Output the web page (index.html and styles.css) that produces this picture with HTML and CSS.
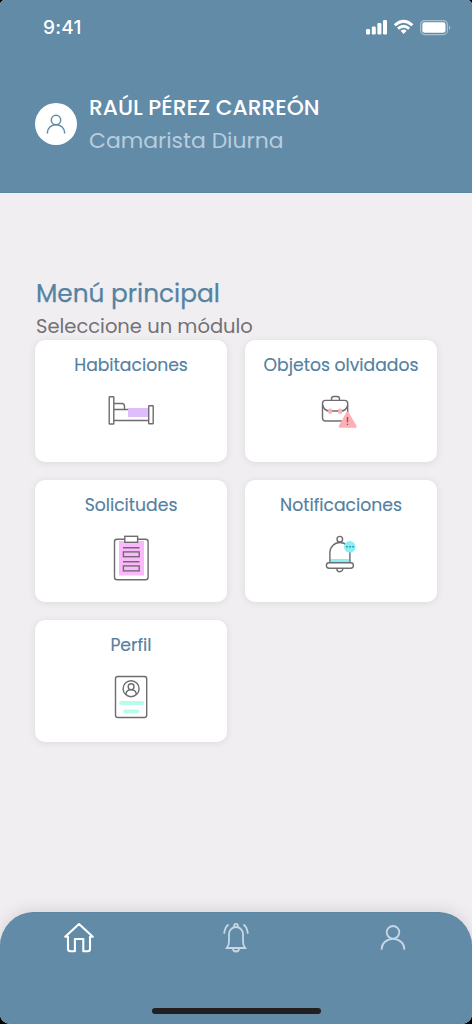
FILE: index.html
```html
<!DOCTYPE html>
<html lang="es">
<head>
<meta charset="utf-8">
<meta name="viewport" content="width=device-width">
<title>Menú principal</title>
<link rel="stylesheet" href="styles.css">
</head>
<body>
<div class="screen">
  <header class="header">
    <div class="status">
      <span class="time">9:41</span>
      <svg class="signals" width="86" height="18" viewBox="0 0 86 18" fill="#fff">
        <rect x="0" y="11" width="4" height="5.5" rx="1.2"/><rect x="5.8" y="8.5" width="4" height="8" rx="1.2"/><rect x="11.4" y="5" width="4" height="11.5" rx="1.2"/><rect x="17" y="2" width="4" height="14.5" rx="1.2"/>
        <g fill="none" stroke="#fff" stroke-width="2.9"><path d="M28.8 7.2q8.8-8 17.6 0"/><path d="M32 10.7q5.6-4.8 11.2 0"/></g><path d="M34.6 12.8q3-2.4 6 0l-3 3.2z"/>
        <rect x="54.6" y="2.6" width="26.8" height="14" rx="4" fill="none" stroke="#fff" stroke-opacity=".45" stroke-width="1.2"/><rect x="56.3" y="4.2" width="23.2" height="10.6" rx="2.4"/><path d="M83 7.5q2.6 2 0 4.5z" fill-opacity=".5"/>
      </svg>
    </div>
    <div class="user">
      <div class="avatar"><svg width="20" height="21" viewBox="0 0 20 21" fill="none" stroke="#628ba8" stroke-width="1.5"><circle cx="10" cy="6" r="4.7"/><path d="M1.4 19.5v-1a8.6 7.8 0 0 1 17.2 0v1"/></svg></div>
      <div class="who"><div class="name">RAÚL PÉREZ CARREÓN</div><div class="role">Camarista Diurna</div></div>
    </div>
  </header>
  <main class="main">
    <h1 class="title">Menú principal</h1>
    <p class="subtitle">Seleccione un módulo</p>
    <div class="grid">
      <a class="card"><span class="label">Habitaciones</span>
        <svg class="icon" width="75" height="60" viewBox="0 0 75 60" fill="none" stroke="#6e6c70" stroke-width="1.4"><path d="M33 28h20v9H33z" fill="#dfbdfd" stroke="none"/><rect x="14.2" y="16.8" width="4.6" height="27.2" rx=".6"/><path d="M19 23.5h8q2.5 0 2.5 3v3M19 29.5h14M19 40.5h34"/><rect x="53.7" y="25.7" width="4.5" height="18" rx=".5"/></svg></a>
      <a class="card"><span class="label">Objetos olvidados</span>
        <svg class="icon icon-case" width="75" height="60" viewBox="0 0 75 60" fill="none" stroke="#6e6c70" stroke-width="1.4"><rect x="18.5" y="20.4" width="25.2" height="20.6" rx="3"/><path d="M27.5 20v-1.2q0-2.3 2.3-2.3h3.4q2.3 0 2.3 2.3V20M18.7 25q1.2 6 7 6h11q5.8 0 7-6"/><g fill="#feafb4" stroke="none"><rect x="24.2" y="28.5" width="3.8" height="5.2" rx="1.5"/><rect x="34.2" y="28.5" width="3.8" height="5.2" rx="1.5"/><path d="M42.4 32.2q1.1-1.6 2.2 0l8 13.8q.8 1.8-1 1.8H35.8q-1.8 0-1-1.8z"/></g><path d="M43.5 37v5.3M43.5 43.8v1.3" stroke="#725b60" stroke-width="1.3"/></svg></a>
      <a class="card"><span class="label">Solicitudes</span>
        <svg class="icon" width="75" height="70" viewBox="0 0 75 70" fill="none" stroke="#6e6c70" stroke-width="1.4"><path d="M24 21h25v34.5H24z" fill="#fbb8fa" stroke="none"/><rect x="19.5" y="19.2" width="33.6" height="40.6" rx="2.5"/><rect x="29.8" y="16.3" width="12.8" height="6" fill="#fff"/><path d="M28 27.8h16.5M28 41.8h16.5"/><rect x="28.4" y="31.9" width="15.8" height="4.8"/><rect x="28.4" y="45.9" width="15.8" height="5"/></svg></a>
      <a class="card"><span class="label">Notificaciones</span>
        <svg class="icon" width="75" height="70" viewBox="0 0 75 70" fill="none" stroke="#6e6c70" stroke-width="1.4"><path d="M25.4 39h19v4h-19z" fill="#83f0fc" stroke="none"/><circle cx="34.8" cy="19.2" r="2.8"/><path d="M24.9 42V32.5a10 10 0 0 1 20 0V42M31.8 48.7a3 3 0 0 0 6 0"/><rect x="21.4" y="42.8" width="27" height="5.5" rx="2.7" fill="#fff"/><circle cx="44.8" cy="26.8" r="5.8" fill="#83f0fc" stroke="none"/><path d="M41 26.8h8" stroke="#538b98" stroke-dasharray="1.8 1.3"/></svg></a>
      <a class="card"><span class="label">Perfil</span>
        <svg class="icon" width="75" height="70" viewBox="0 0 75 70" fill="none" stroke="#6e6c70" stroke-width="1.4"><rect x="20.5" y="16.5" width="31.2" height="41" rx="2.3"/><circle cx="36.1" cy="28.7" r="8"/><circle cx="36.1" cy="26.7" r="2.9"/><path d="M31 34.7v-1q.5-4 5.1-4t5.1 4v1"/><path d="M26 43h21.2M30.2 51.3h12" stroke="#b8fbed" stroke-width="3.8" stroke-linecap="round"/></svg></a>
    </div>
  </main>
  <footer class="footer">
    <nav class="nav">
      <a class="tab"><svg width="32" height="32" viewBox="0 0 32 32" fill="none" stroke="#fff" stroke-width="2.1" stroke-linejoin="round" stroke-linecap="round"><path d="M5 15.8h-2.8L16 3l13.8 12.8H27V28q0 2.2-2.2 2.2h-4.5V18h-8.4v12.2H7.4Q5 30.2 5 28z"/></svg></a>
      <a class="tab"><svg width="32" height="32" viewBox="0 0 32 32" fill="none" stroke="#c6d7e5" stroke-width="1.8" stroke-linecap="round"><path d="M6.8 27h18.4q-2.2-3-2.2-6v-8a7 7 0 0 0-14 0v8q0 3-2.2 6zM13 27.5a3 3 0 0 0 6 0M14.2 5.7V4.5q0-1.6 1.8-1.6t1.8 1.6v1.2M8 4Q5.2 6 4.2 12M24 4q2.8 2 3.8 8"/></svg></a>
      <a class="tab"><svg width="32" height="32" viewBox="0 0 32 32" fill="none" stroke="#c6d7e5" stroke-width="1.8"><circle cx="16" cy="11.3" r="6.3"/><path d="M4.7 28.7v-1a11.3 9.8 0 0 1 22.6 0v1"/></svg></a>
    </nav>
    <div class="home-bar"></div>
  </footer>
</div>
</body>
</html>
```
FILE: styles.css
```css
* { box-sizing: border-box; }
body { margin: 0; background: #000; font-family: Poppins, Inter, "Noto Sans", sans-serif; }
.screen { width: 472px; height: 1024px; display: flex; flex-direction: column; background: #f0eef1; border-radius: 5px 5px 10px 10px; overflow: hidden; box-shadow: 0 0 0 10px #000; }
.header { height: 193px; flex: none; background: #628ba8; border-bottom: 1px solid #5a85a3; padding: 18px 20px 0 35px; }
.status { display: flex; justify-content: space-between; height: 20px; }
.time { color: #fff; font-family: Inter, sans-serif; font-size: 19px; line-height: 20px; font-weight: 500; margin-left: 8px; letter-spacing: .3px; }
.signals { flex: none; }
.user { display: flex; align-items: center; gap: 12px; margin-top: 53px; height: 66px; }
.avatar { width: 42px; height: 42px; border-radius: 50%; background: #fff; display: flex; align-items: center; justify-content: center; }
.who { white-space: nowrap; }
.name { color: #fff; font-size: 21.8px; line-height: 33px; font-weight: 500; }
.role { color: #b9cddd; font-size: 21.9px; line-height: 33px; }
.main { flex: 1; padding: 83px 35px 0; }
.title { margin: 0; padding-left: 1px; font-size: 24.8px; line-height: 35px; height: 38px; font-weight: 400; color: #5483a2; -webkit-text-stroke: .25px #5483a2; }
.subtitle { margin: 0; padding-left: 1px; font-size: 19.5px; line-height: 26px; height: 26px; color: #737174; }
.grid { display: grid; grid-template-columns: 192px 192px; grid-auto-rows: 122px; gap: 18px; }
.card { background: #fff; border-radius: 10px; box-shadow: 0 1px 7px rgba(80,70,90,.12); display: flex; flex-direction: column; align-items: center; padding-top: 12px; }
.label { color: #5480a0; font-size: 17.2px; line-height: 26px; height: 28px; font-weight: 400; white-space: nowrap; -webkit-text-stroke: .15px #5480a0; }
.icon { flex: none; margin-left: 2px; }
.icon-case { margin-left: 0; }
.footer { height: 112px; flex: none; display: flex; flex-direction: column; justify-content: space-between; align-items: center; background: #628ba8; border-top: 1px solid #5a85a3; border-radius: 34px 34px 0 0; padding: 8px 0 10px; box-shadow: 0 -3px 14px rgba(60,50,60,.12); }
.nav { display: grid; grid-template-columns: repeat(3, 157px); justify-items: center; }
.tab { height: 32px; }
.home-bar { width: 169px; height: 6px; border-radius: 3px; background: #202020; }
```
